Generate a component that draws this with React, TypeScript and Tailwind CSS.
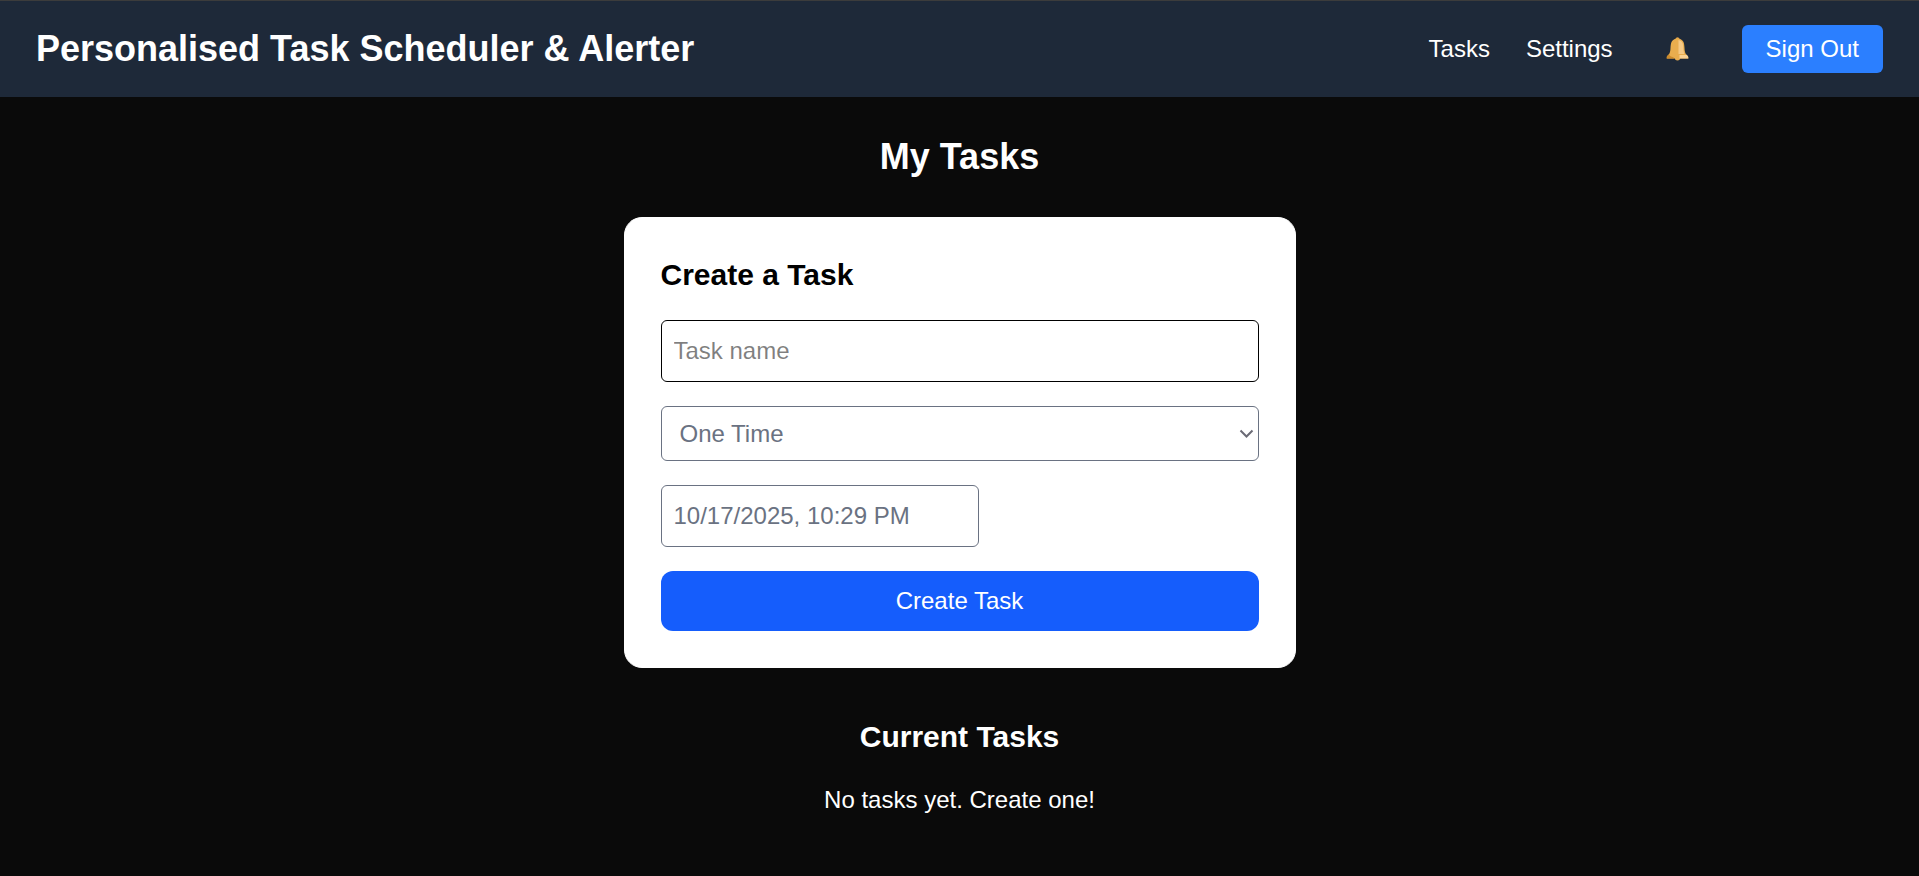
import { useState } from 'react';
import type { FormEvent } from 'react';

interface Task {
  id: number;
  name: string;
  type: string;
  dueAt: string;
}

function BellIcon() {
  return (
    <svg className="h-6 w-[33px]" viewBox="0 0 33 24" aria-hidden="true">
      <circle cx="16.500" cy="2" r="1.800" fill="#e0a040" />
      <circle cx="16.500" cy="20.800" r="2.700" fill="#e8ac50" />
      <path d="M16.500 1.200c-2 0-4.600 1.300-5.700 3.200-.9 1.600-1.200 4-1.300 6.600-.1 3-.5 4.600-1.500 6.200l-2.200 4.300h21.400l-2.200-4.300c-1-1.600-1.400-3.200-1.500-6.200-.1-2.600-.4-5-1.300-6.600-1.100-1.900-3.700-3.200-5.700-3.200z" fill="#e9ad4e" />
      <path d="M17.500 3c2.400.5 3.500 1.600 4.100 3.200.7 1.700.7 4.800.9 7 .1 1.500.4 2.600.9 3.800h-5.900z" fill="#f6c985" />
      <path d="M8 17.200c-1.800.8-2.500 2.200-2.500 4.300h8l-1.500-1.500c-1.800-.2-3.300-1-4-2.800z" fill="#cd8b2c" />
      <path d="M18.500 17.500h6.700c1.500.8 2.300 2 2.300 4h-9z" fill="#fbd192" />
      <path d="M18 17.500h7" stroke="#e9ad4e" strokeWidth="1" />
    </svg>
  );
}

function Navbar() {
  return (
    <nav className="flex items-center justify-between border-t border-[#3c3c3c] bg-gray-800 px-9 py-6">
      <h1 className="text-[36px] leading-[48px] font-bold">Personalised Task Scheduler &amp; Alerter</h1>
      <div className="flex items-center gap-9">
        <a href="#tasks">Tasks</a>
        <a href="#settings">Settings</a>
        <button className="px-3" type="button" aria-label="Notifications">
          <BellIcon />
        </button>
        <button className="h-12 rounded-md bg-blue-500 px-6" type="button">
          Sign Out
        </button>
      </div>
    </nav>
  );
}

export default function App() {
  const [tasks, setTasks] = useState<Task[]>([]);
  const [name, setName] = useState('');
  const [type, setType] = useState('one-time');
  const [dueAt, setDueAt] = useState('10/17/2025, 10:29 PM');

  function createTask(event: FormEvent) {
    event.preventDefault();
    if (!name.trim()) return;
    setTasks([...tasks, { id: Date.now(), name, type, dueAt }]);
    setName('');
  }

  return (
    <div className="min-h-screen bg-neutral-950 font-['Liberation_Sans',Arial,sans-serif] text-[24px] leading-9 text-white">
      <Navbar />

      <main className="flex flex-col items-center p-9">
        <h2 className="mb-9 text-[36px] leading-[48px] font-bold">My Tasks</h2>

        <form className="flex w-full max-w-2xl flex-col gap-6 rounded-[18px] border border-white bg-white p-9 text-black" onSubmit={createTask}>
          <h3 className="text-[30px] leading-[42px] font-bold">Create a Task</h3>
          <input
            className="w-full rounded-md border border-black p-3"
            type="text"
            aria-label="Task name"
            placeholder="Task name"
            value={name}
            onChange={(event) => setName(event.target.value)}
          />
          <div className="relative text-gray-500">
            <select
              className="block h-[55px] w-full appearance-none rounded-md border border-gray-500 px-[18px]"
              aria-label="Task type"
              value={type}
              onChange={(event) => setType(event.target.value)}
            >
              <option value="one-time">One Time</option>
              <option value="recurring">Recurring</option>
            </select>
            <svg className="pointer-events-none absolute top-5 right-1 h-4 w-4" viewBox="0 0 16 16" fill="none" stroke="#6b6b76" strokeWidth="2" aria-hidden="true">
              <path d="M1.500 4.500 7.500 10.500 13.500 4.500" />
            </svg>
          </div>
          <input
            className="w-[318px] rounded-md border border-gray-500 p-3 text-gray-500"
            type="text"
            aria-label="Due date"
            value={dueAt}
            onChange={(event) => setDueAt(event.target.value)}
          />
          <button className="w-full rounded-xl bg-blue-600 py-3 text-white" type="submit">
            Create Task
          </button>
        </form>

        <h3 className="mt-12 mb-6 text-[30px] leading-[42px] font-bold">Current Tasks</h3>
        {tasks.length === 0 ? (
          <p>No tasks yet. Create one!</p>
        ) : (
          <ul className="w-full max-w-2xl space-y-3">
            {tasks.map((task) => (
              <li key={task.id} className="flex justify-between">
                <span>{task.name}</span>
                <span>{task.dueAt}</span>
              </li>
            ))}
          </ul>
        )}
      </main>
    </div>
  );
}
